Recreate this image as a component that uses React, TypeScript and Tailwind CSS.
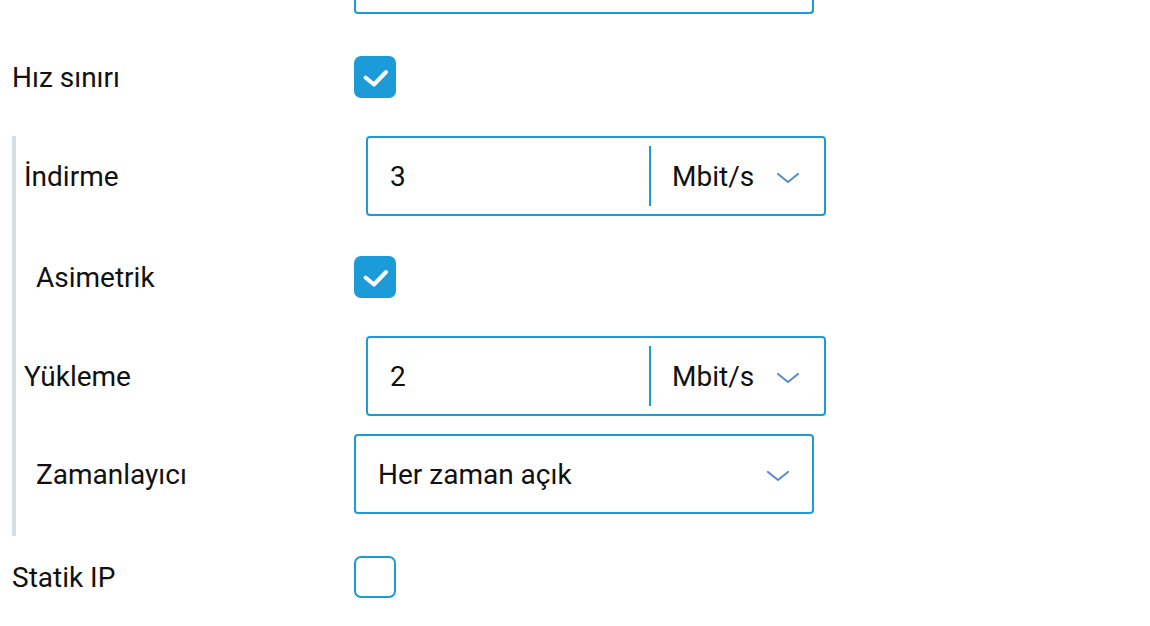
import React from 'react';

const font = { fontFamily: 'Roboto, "Noto Sans", sans-serif' };

const Check = ({ checked }: { checked: boolean }) =>
  checked ? (
    <div className="flex h-[42px] w-[42px] items-center justify-center rounded-[7px] bg-[#1b9bd7]">
      <svg width="42" height="42" viewBox="0 0 42 42" fill="none">
        <path d="M11.5 21.5 L20 28.5 L32 16" stroke="#fff" strokeWidth="4" strokeLinecap="round" strokeLinejoin="round" />
      </svg>
    </div>
  ) : (
    <div className="h-[42px] w-[42px] rounded-[7px] border-2 border-[#1b9bd7] bg-white" />
  );

const Chevron = () => (
  <svg className="mt-[4px]" width="24" height="12" viewBox="0 0 24 12" fill="none">
    <path d="M2 2 L12 10 L22 2" stroke="#5a8fc8" strokeWidth="2.2" strokeLinecap="round" strokeLinejoin="round" />
  </svg>
);

const UnitInput = ({ value }: { value: string }) => (
  <div className="flex h-[80px] w-[460px] items-center rounded-[4px] border-2 border-[#1b9bd7]">
    <div className="flex h-full w-[281px] items-center pl-[22px]">
      <span className="translate-y-[1px]">{value}</span>
    </div>
    <div className="h-[60px] w-[2px] bg-[#1b9bd7]" />
    <div className="flex flex-1 items-center justify-between pl-[21px] pr-[24px]">
      <span className="translate-y-[1px]">Mbit/s</span>
      <Chevron />
    </div>
  </div>
);

const Row = ({ label, labelWidth, children, className = '' }: { label: string; labelWidth: string; children: React.ReactNode; className?: string }) => (
  <div className={`flex items-center ${className}`}>
    <div className={`translate-y-[1px] ${labelWidth}`}>{label}</div>
    {children}
  </div>
);

export default function App() {
  return (
    <div className="h-[626px] w-[1150px] overflow-hidden bg-white text-[28px] text-[#111]" style={font}>
      <div className="pl-[12px]">
        <div className="ml-[342px] h-[14px] w-[460px] rounded-b-[4px] border-2 border-t-0 border-[#1b9bd7]" />

        <Row label="Hız sınırı" labelWidth="w-[342px]" className="mt-[42px] h-[42px]">
          <Check checked />
        </Row>

        <div className="mt-[38px] border-l-4 border-[#d8dce3] pb-[22px] pl-[8px]">
          <Row label="İndirme" labelWidth="w-[342px]" className="h-[80px]">
            <UnitInput value="3" />
          </Row>
          <Row label="Asimetrik" labelWidth="w-[330px] pl-[12px]" className="mt-[40px] h-[42px]">
            <Check checked />
          </Row>
          <Row label="Yükleme" labelWidth="w-[342px]" className="mt-[38px] h-[80px]">
            <UnitInput value="2" />
          </Row>
          <Row label="Zamanlayıcı" labelWidth="w-[330px] pl-[12px]" className="mt-[18px] h-[80px]">
            <div className="flex h-[80px] w-[460px] items-center justify-between rounded-[4px] border-2 border-[#1b9bd7] pl-[22px] pr-[22px]">
              <span className="translate-y-[1px]">Her zaman açık</span>
              <Chevron />
            </div>
          </Row>
        </div>

        <Row label="Statik IP" labelWidth="w-[342px]" className="mt-[20px] h-[42px]">
          <Check checked={false} />
        </Row>
      </div>
    </div>
  );
}
